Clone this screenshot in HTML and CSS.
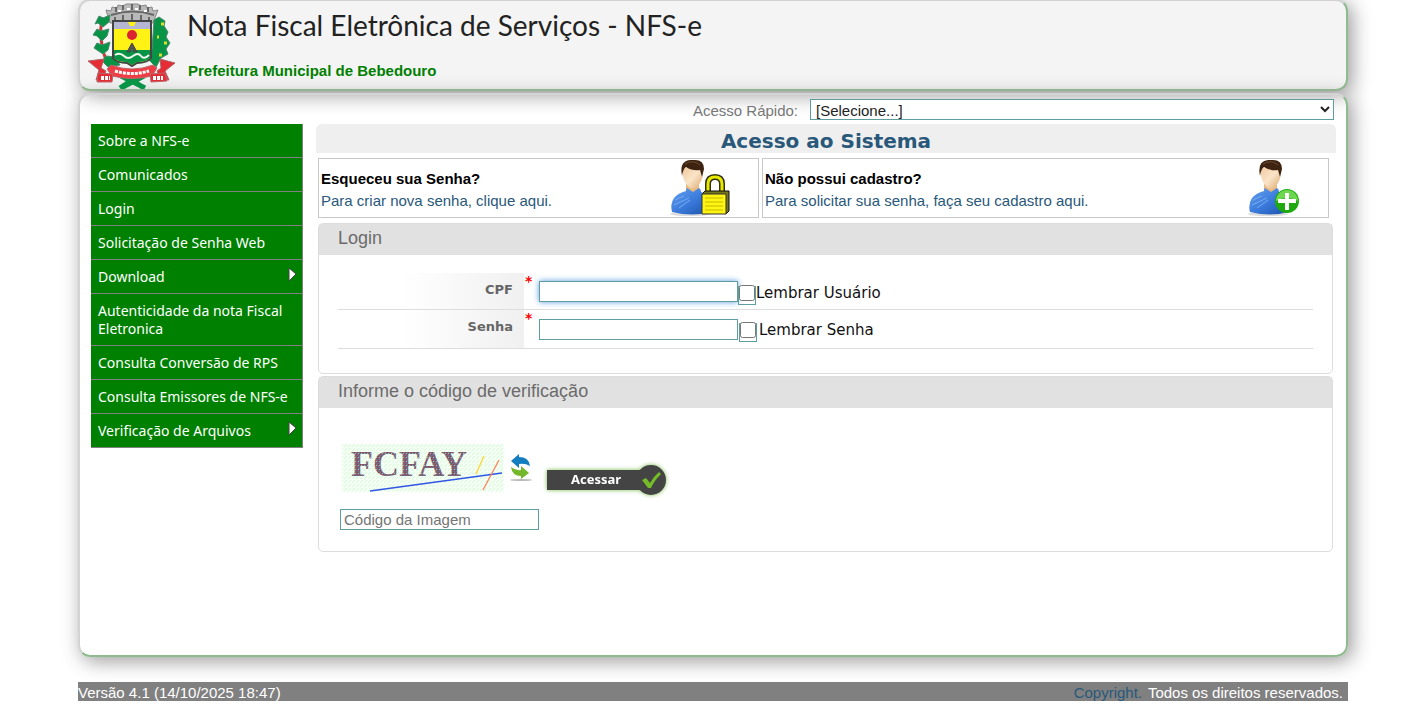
FILE: index.html
```html
<!DOCTYPE html>
<html lang="pt-BR">
  <head>
    <meta charset="UTF-8" />
    <meta name="viewport" content="width=device-width, initial-scale=1.0" />
    <title>Nota Fiscal Eletrônica de Serviços - NFS-e</title>
    <link rel="stylesheet" href="styles.css">
  </head>
  <body>
    <header class="topo">
      <svg class="brasao" viewBox="0 0 88 88" aria-hidden="true">
        <!-- coroa -->
        <path d="M18 9l5 1 1-4 5 1 1-3 5 1 3-2h12l3 2 5-1 1 3 5-1 1 4 5-1-5 13H22z" fill="#b9b9b9" stroke="#888" stroke-width="1"/>
        <path d="M23 14q22-7 43 0M28 6v5M35 4v5M44 3v6M52 4v5M60 6v5M27 16v4M35 14v5M44 13v6M53 14v5M61 16v4" fill="none" stroke="#666" stroke-width="2"/>
        <path d="M30 10h3M39 8h3M47 8h3M56 10h3" stroke="#fff" stroke-width="2"/>
        <!-- ramos -->
        <path d="M14 16q-4 24 5 46" fill="none" stroke="#c8363a" stroke-width="3"/>
        <path d="M11 15l4 2 7-3-1 7-6 5-5-4-3 1zM9 28l4 2 8-2-2 7-5 5-5-5-4-1zM9 42l5 2 8-3-2 8-5 4-6-4-3-2zM18 55l9 1 5 8-12 2-6-6z" fill="#079447" stroke="#4a8a6a"/>
        <path d="M66 19l5-3 6 4-1 5 4 6-2 5 4 6-4 6 2 5-7 4-5 9-7-7 3-10z" fill="#079447" stroke="#4a8a6a"/>
        <path d="M73 23h3M76 42h3M69 36h2M71 54h3" stroke="#d8df2c" stroke-width="3"/>
        <!-- escudo -->
        <path d="M25 20h38v37q-4 5-14 5l-5 3-5-3q-10 0-14-5z" fill="#fff215" stroke="#444" stroke-width="2"/>
        <path d="M26 21h36v7H26z" fill="#b4b6d4"/>
        <path d="M26 49h36v8q-4 4-13 4l-5 3-5-3q-9 0-13-4z" fill="#079447"/>
        <path d="M27 54q5-3 9 1t9 0 8 0 8-1" fill="none" stroke="#f3f7ee" stroke-width="2"/>
        <path d="M40 21h8l-2 4h-4z" fill="#fff215"/>
        <circle cx="44" cy="34" r="5" fill="#dc2532"/>
        <path d="M44 42l5 9h-3l-2-4-2 4h-3z" fill="#555" stroke="#444"/>
        <!-- laço e faixa -->
        <path d="M32 87l12-8 12 8M33 75l24 12M56 75L33 87" fill="none" stroke="#079447" stroke-width="5"/>
        <path d="M0 60l16-2-3 9 5 3-4 9H8l3-10zM72 58l15 4-10 8 4 9-9-1-3-8 4-3z" fill="#e72b35" stroke="#a9666a"/>
        <path d="M23 64q21 8 42 0l4 3-5 8q-20 5-40 0l-5-7z" fill="#ef3d45" stroke="#b9666c"/>
        <path d="M27 70q17 5 34 0" fill="none" stroke="#fff" stroke-width="3" stroke-dasharray="3 1"/>
        <path d="M10 72l15 1-1 8H9zM62 73l15-1 2 8-16 1z" fill="#e72b35" stroke="#b9666c"/>
        <path d="M13 77h9M65 77h10" stroke="#fff" stroke-width="4" stroke-dasharray="3 1"/>
      </svg>
      <div class="topo-texto">
        <h1>Nota Fiscal Eletrônica de Serviços - NFS-e</h1>
        <strong>Prefeitura Municipal de Bebedouro</strong>
      </div>
    </header>

    <div class="conteudo">
      <nav class="menu">
        <a href="#">Sobre a NFS-e</a>
        <a href="#">Comunicados</a>
        <a href="#">Login</a>
        <a href="#">Solicitação de Senha Web</a>
        <a href="#" class="submenu">Download
          <svg viewBox="0 0 9 15" aria-hidden="true"><path d="M1 1l7 6-7 7z" fill="#fff" stroke="#444"/></svg>
        </a>
        <a href="#">Autenticidade da nota Fiscal Eletronica</a>
        <a href="#">Consulta Conversão de RPS</a>
        <a href="#">Consulta Emissores de NFS-e</a>
        <a href="#" class="submenu">Verificação de Arquivos
          <svg viewBox="0 0 9 15" aria-hidden="true"><path d="M1 1l7 6-7 7z" fill="#fff" stroke="#444"/></svg>
        </a>
      </nav>

      <main class="principal">
        <div class="acesso-rapido">
          <label for="acesso">Acesso Rápido:</label>
          <select id="acesso">
            <option>[Selecione...]</option>
          </select>
        </div>

        <h2>Acesso ao Sistema</h2>

        <div class="atalhos">
          <a href="#" class="atalho">
            <span><b>Esqueceu sua Senha?</b>Para criar nova senha, clique aqui.</span>
            <svg class="icone-senha" viewBox="0 0 60 58" aria-hidden="true">
              <defs>
                <linearGradient id="azul" x1="0" y1="0" x2="1" y2="1">
                  <stop offset="0" stop-color="#66a2ef"/>
                  <stop offset=".5" stop-color="#3b7bdc"/>
                  <stop offset="1" stop-color="#1b50a6"/>
                </linearGradient>
                <linearGradient id="pele" x1="0" y1="0" x2="1" y2="1">
                  <stop offset="0" stop-color="#f1c99e"/>
                  <stop offset=".5" stop-color="#fae4c8"/>
                  <stop offset="1" stop-color="#dca870"/>
                </linearGradient>
              </defs>
              <g id="pessoa">
                <ellipse cx="20" cy="55" rx="20" ry="2" fill="#ddd"/>
                <path d="M16 25h13v7l-5 4-8-4z" fill="#e9b981"/>
                <path d="M2 53q-2-8 2-14 4-5 12-7 0-3 1-3l6 4 6-4q2 1 2 4 8 3 10 9 1 7-1 11-17 5-38 0z" fill="url(#azul)"/>
                <path d="M5 41l9-4M4 46l15-7M9 49l11-8" stroke="#79abf0" fill="none"/>
                <path d="M13 10q9-5 19 0 2 8-2 14-4 6-7 6-4 0-8-7-3-6-2-13z" fill="url(#pele)"/>
                <path d="M12 17Q9 2 20 1h5q9 0 9 9l-2 8-2-7q-8 1-14-3-3 2-4 9z" fill="#3e2410"/>
                <path d="M15 5q8-5 15 1" stroke="#6b4931" fill="none"/>
              </g>
              <path d="M38 35V25q0-7 7-7t7 7v10" fill="none" stroke="#33330f" stroke-width="6"/>
              <path d="M38 35V25q0-7 7-7t7 7v10" fill="none" stroke="#e7ea00" stroke-width="3"/>
              <path d="M32 35l3-3h24v20l-3 3z" fill="#77751b" stroke="#111"/>
              <path d="M32 35h24v20H32z" fill="#fff513" stroke="#333"/>
              <path d="M35 39h18M35 43h18M35 47h18M35 51h18" stroke="#c3b900"/>
            </svg>
          </a>
          <a href="#" class="atalho">
            <span><b>Não possui cadastro?</b>Para solicitar sua senha, faça seu cadastro aqui.</span>
            <svg class="icone-cadastro" viewBox="0 0 52 58" aria-hidden="true">
              <use href="#pessoa"/>
              <circle cx="39" cy="42" r="12" fill="#1eaa0e"/>
              <path d="M28 42a11 11 0 0 1 22 0q-11-6-22 0z" fill="#6ed750"/>
              <path d="M39 34v17M30 42h18" stroke="#fff" stroke-width="4"/>
            </svg>
          </a>
        </div>

        <form>
          <section class="painel">
            <h3>Login</h3>
            <div class="campos">
              <div class="linha">
                <label class="rotulo" for="cpf">CPF</label>
                <span class="obrigatorio">*</span>
                <input type="text" id="cpf" class="foco">
                <label class="lembrar"><span class="caixa"><input type="checkbox"></span>Lembrar Usuário</label>
              </div>
              <div class="linha">
                <label class="rotulo" for="senha">Senha</label>
                <span class="obrigatorio">*</span>
                <input type="password" id="senha">
                <label class="lembrar senha"><span class="caixa"><input type="checkbox"></span>Lembrar Senha</label>
              </div>
            </div>
          </section>

          <section class="painel">
            <h3>Informe o código de verificação</h3>
            <div class="verificacao">
              <div class="imagem-linha">
                <svg class="captcha" viewBox="0 0 162 48" role="img" aria-label="FCFAY">
                  <defs>
                    <pattern id="pontos" width="4" height="4" patternUnits="userSpaceOnUse">
                      <rect width="4" height="4" fill="#f3fff2"/>
                      <path d="M0 0h1v1H0zM2 2h1v1H2zM3 1h1v1H3z" fill="#d8f8dc"/>
                    </pattern>
                    <pattern id="trama" width="3" height="4" patternUnits="userSpaceOnUse">
                      <rect width="3" height="4" fill="#75697f"/>
                      <path d="M0 0h1v1H0zM2 2h1v1H2z" fill="#9b3e43"/>
                      <path d="M1 1h1v1H1z" fill="#a5b7bc"/>
                    </pattern>
                  </defs>
                  <rect width="162" height="48" fill="url(#pontos)"/>
                  <text x="9" y="32" fill="url(#trama)">FCFAY</text>
                  <path d="M28 47L160 29" stroke="#3156e6" stroke-width="1.4"/>
                  <path d="M134 30l8-18" stroke="#ffd332" stroke-width="1.3"/>
                  <path d="M141 46l16-30" stroke="#ff8059" stroke-width="1.3"/>
                </svg>
                <button type="button" class="atualizar" aria-label="Atualizar imagem">
                  <svg viewBox="0 0 24 28" aria-hidden="true">
                    <ellipse cx="13" cy="26" rx="11" ry="1" fill="#bbb"/>
                    <path d="M3 7l8-7v3q10 0 11 9-5-3-11-2v4z" fill="#147dc0"/>
                    <path d="M21 19l-8 6v-3Q4 22 3 13q5 4 10 3v-4z" fill="#75b72a"/>
                  </svg>
                </button>
                <button type="submit" class="acessar">
                  <span>Acessar</span>
                  <svg viewBox="0 0 32 32" aria-hidden="true">
                    <circle cx="16" cy="16" r="15" fill="#444"/>
                    <path d="M7 16l4-2 4 5q4-7 9-11l2 2q-7 7-10 14h-3z" fill="#74bd28"/>
                  </svg>
                </button>
              </div>
              <input type="text" placeholder="Código da Imagem" aria-label="Código da Imagem">
            </div>
          </section>
        </form>
      </main>
    </div>

    <footer class="rodape">
      <span>Versão 4.1 (14/10/2025 18:47)</span>
      <span><a href="#">Copyright.</a> Todos os direitos reservados.</span>
    </footer>
  </body>
</html>
```
FILE: styles.css
```css
* {
  box-sizing: border-box;
}

body {
  margin: 0;
  padding: 0 55px 0 78px;
  background: #fff;
  font-family: "Liberation Sans", Arial, sans-serif;
  font-size: 15px;
}

a {
  color: #29587a;
  text-decoration: none;
}

input,
select,
.caixa {
  border: 1px solid #5f9ea0;
}

input,
select {
  margin: 0;
  border-radius: 0;
  background: #fff;
  font: inherit;
}

input[type="text"],
input[type="password"] {
  width: 199px;
  height: 21px;
  padding: 0 3px;
  outline: none;
}

/* Topo */
.topo,
.conteudo {
  border: 2px solid #d3d3d3;
  border-right-color: #8fbc8f;
  border-bottom-color: #8fbc8f;
  border-radius: 12px;
  box-shadow: 4px 4px 20px #999;
}

.topo {
  display: flex;
  height: 92px;
  margin-top: -1px;
  padding-left: 8px;
  background: #f4f4f4;
}

.brasao {
  width: 88px;
  height: 88px;
}

.topo-texto {
  padding: 5px 0 0 11px;
}

h1 {
  margin: 0;
  color: #222;
  font: 28px/38px Lato, sans-serif;
}

.topo strong {
  display: block;
  margin: 18px 0 0 1px;
  color: #008000;
  line-height: 18px;
}

/* Corpo da página */
.conteudo {
  display: flex;
  align-items: flex-start;
  min-height: 564px;
  margin-top: 2px;
  padding: 4px 10px 0 11px;
}

.menu {
  flex: none;
  width: 212px;
  margin-top: 25px;
  border-right: 1px solid #808080;
  background: #008000;
}

.menu a {
  display: block;
  padding: 8px 7px 7px;
  border-bottom: 1px solid #808080;
  color: #fff;
  font: 14px/18px "Noto Sans", Tahoma, sans-serif;
}

.menu .submenu {
  display: flex;
  justify-content: space-between;
  padding-right: 5px;
}

.submenu svg {
  width: 9px;
  height: 15px;
  margin-top: -1px;
}

.principal {
  flex: 1;
  margin-left: 13px;
}

.acesso-rapido {
  display: flex;
  justify-content: flex-end;
  gap: 12px;
  margin-right: 2px;
  color: #777;
  line-height: 23px;
}

.acesso-rapido label {
  height: 21px;
}

.acesso-rapido select {
  width: 524px;
  height: 21px;
  padding: 1px 0 0 1px;
  color: #222;
}

h2 {
  height: 29px;
  margin: 4px 0 5px;
  border-radius: 6px 6px 0 0;
  background: #efefef;
  color: #29587a;
  font: bold 20px/34px "DejaVu Sans", Verdana, sans-serif;
  text-align: center;
}

.atalhos {
  display: grid;
  grid-template-columns: 441fr 567fr;
  gap: 3px;
  margin: 0 7px 5px 2px;
}

.atalho {
  display: flex;
  justify-content: space-between;
  height: 60px;
  padding: 0 28px 0 2px;
  border: 1px solid #c8c8c8;
  line-height: 22px;
}

.atalho span {
  padding-top: 9px;
}

.atalho b {
  display: block;
  color: #000;
}

.atalho svg {
  height: 58px;
}

.icone-senha {
  width: 60px;
}

.icone-cadastro {
  width: 52px;
}

/* Painéis do formulário */
.painel {
  margin: 0 3px 2px 2px;
  border: 1px solid #ddd;
  border-radius: 5px;
}

h3 {
  margin: 0;
  padding: 0 0 3px 19px;
  background: #e1e1e1;
  color: #6b6b6b;
  font-size: 18px;
  font-weight: normal;
  line-height: 28px;
}

.campos {
  padding: 18px 19px 24px;
}

.linha {
  display: flex;
  height: 37px;
  border-bottom: 1px solid #ddd;
}

.linha + .linha {
  height: 39px;
}

.rotulo {
  width: 186px;
  padding-right: 11px;
  background: linear-gradient(to right, #fff 35%, #f0f0f0);
  color: #666;
  font: bold 13px/33px "DejaVu Sans", Verdana, sans-serif;
  text-align: right;
}

.obrigatorio {
  width: 15px;
  padding-left: 1px;
  color: #f00;
  font: bold 14px/16px "DejaVu Sans", Verdana, sans-serif;
}

.linha > input {
  margin-top: 8px;
}

.linha + .linha > input {
  margin-top: 9px;
}

.linha .foco {
  box-shadow: 0 0 6px #5b9be0;
}

.lembrar {
  display: flex;
  margin-top: 13px;
  color: #111;
  font: 15px/14px "DejaVu Sans", Verdana, sans-serif;
}

.lembrar.senha {
  gap: 2px;
  margin-left: 1px;
}

.caixa {
  width: 18px;
  height: 19px;
}

.caixa input {
  display: block;
  width: 16px;
  height: 16px;
  margin-top: -2px;
}

.verificacao {
  padding: 36px 21px 21px;
}

.imagem-linha {
  display: flex;
  margin-bottom: 13px;
  padding-left: 2px;
}

.captcha {
  width: 162px;
  height: 48px;
  margin-right: 4px;
}

.captcha text {
  font: bold 36px "Liberation Serif", serif;
}

button {
  padding: 0;
  border: 0;
  background: none;
}

.atualizar {
  width: 24px;
  height: 28px;
  margin: 10px 15px 0 0;
}

.atualizar svg {
  display: block;
}

.acessar {
  display: flex;
  align-items: center;
  height: 32px;
  margin-top: 20px;
  filter: drop-shadow(0 0 2px #76b843);
}

.acessar span {
  width: 98px;
  height: 20px;
  margin-right: -10px;
  background: #444;
  color: #fff;
  font: bold 13px/18px "Noto Sans", Verdana, sans-serif;
}

.acessar svg {
  width: 32px;
  height: 32px;
}

/* Rodapé */
.rodape {
  display: flex;
  justify-content: space-between;
  height: 19px;
  margin: 25px 0 17px;
  padding-right: 5px;
  background: #808080;
  color: #fff;
  line-height: 21px;
}

.rodape a {
  margin-right: 2px;
}
```
